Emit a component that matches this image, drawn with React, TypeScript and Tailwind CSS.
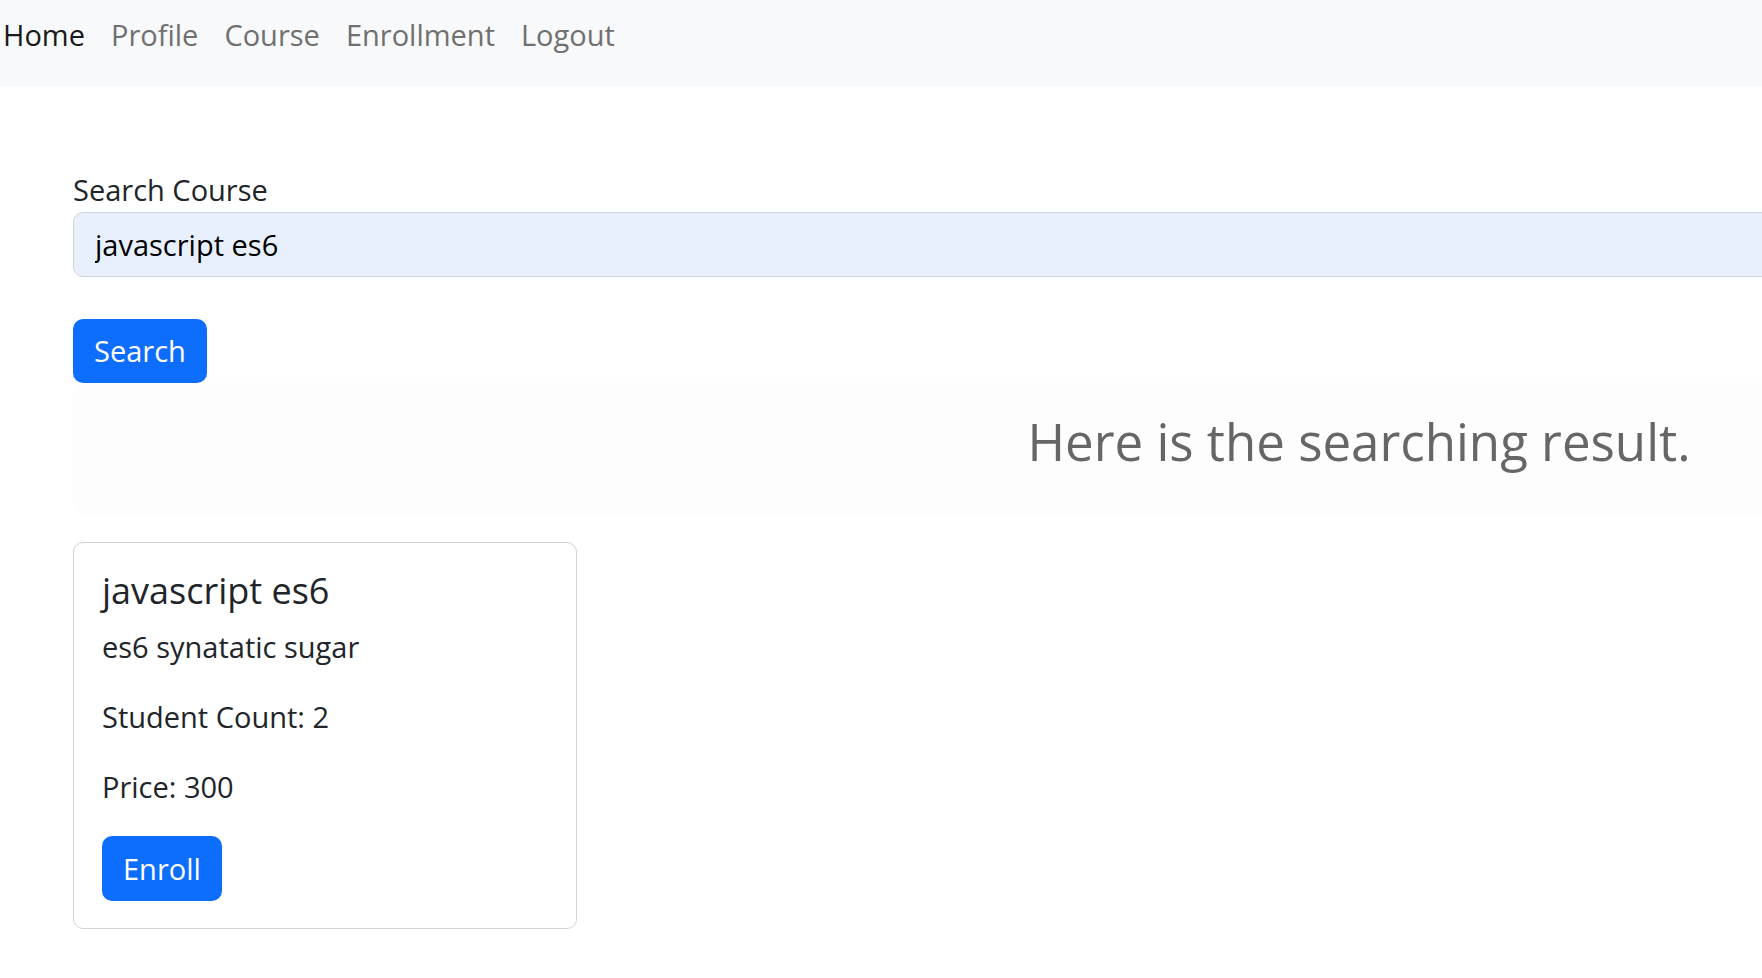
import React from "react";

const navLinks = ["Profile", "Course", "Enrollment", "Logout"];

export default function App() {
  return (
    <div className="w-full overflow-hidden bg-white text-[#212529] text-[29px] leading-[42px] font-['Open_Sans',sans-serif]">
      <nav className="h-[86px] w-full bg-[#f8f9fa] pt-[14px] pl-[3px] flex items-start gap-[26px]">
        <a className="text-[#1a1a1a]">Home</a>
        {navLinks.map((link) => (
          <a key={link} className="text-[#707070]">
            {link}
          </a>
        ))}
      </nav>

      <main className="ml-[73px] w-[2572px] pt-[83px]">
        <label className="block">Search Course</label>
        <input
          className="mt-[1px] block h-[65px] w-full rounded-[10px] border border-[#ced4da] bg-[#e8f0fe] px-[21px] text-black outline-none"
          defaultValue="javascript es6"
        />
        <button className="mt-[42px] h-[64px] rounded-[10px] bg-[#0d6efd] px-[21px] text-white">
          Search
        </button>

        <div className="rounded-[10px] bg-[#fdfdfd] pt-[28px] pb-[42px] text-center">
          <h2 className="text-[51px] leading-[61px] text-[#666666]">Here is the searching result.</h2>
        </div>

        <div className="mt-[28px] w-[504px] rounded-[10px] border border-[#d3d3d3] px-[28px] py-[27px]">
          <h5 className="mb-[14px] text-[36px] leading-[42px]">javascript es6</h5>
          <p className="mb-[28px]">es6 synatatic sugar</p>
          <p className="mb-[28px]">Student Count: 2</p>
          <p className="mb-[28px]">Price: 300</p>
          <button className="h-[65px] rounded-[10px] bg-[#0d6efd] px-[21px] text-white">Enroll</button>
        </div>
      </main>
    </div>
  );
}
